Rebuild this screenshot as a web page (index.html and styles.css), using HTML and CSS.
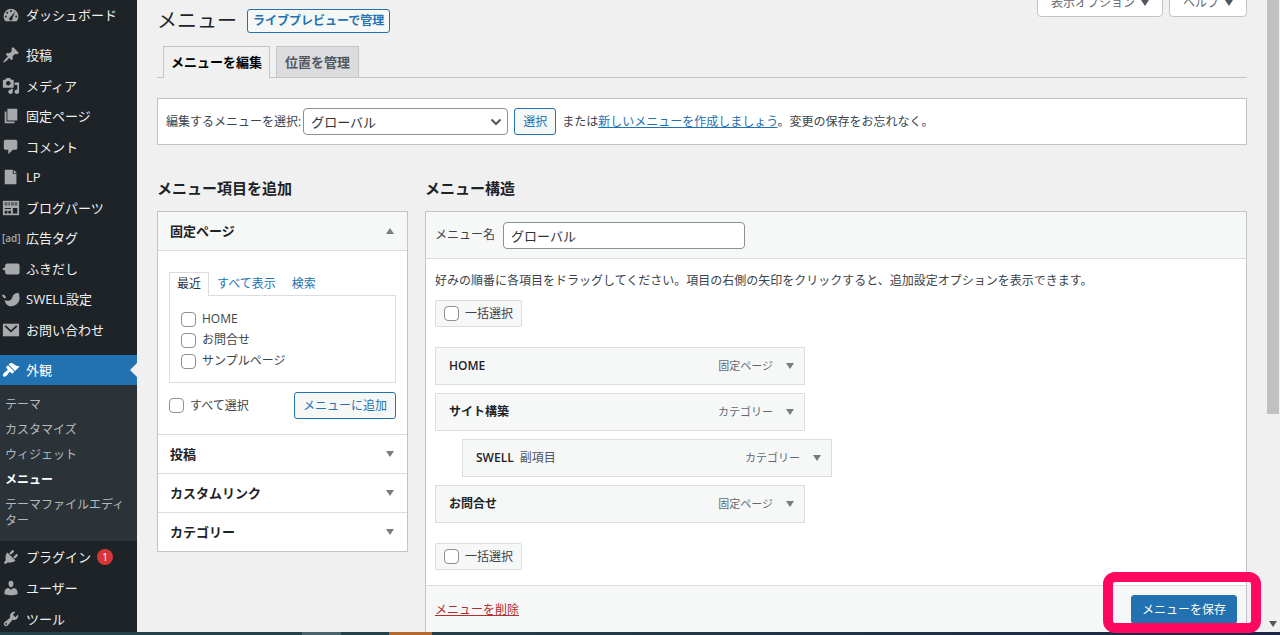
FILE: index.html
```html
<!DOCTYPE html>
<html lang="ja">
<head>
<meta charset="utf-8">
<title>メニュー</title>
<link rel="stylesheet" href="styles.css">
</head>
<body>
<nav class="sidebar">
  <ul class="nav-group nav-top">
    <li><a class="nav-link" href="#"><svg class="icon" viewBox="0 0 20 20"><path d="M3.8 17h12.4A8.300 8.300 0 1 0 3.800 17z"/><g fill="#1d2327"><circle cx="10" cy="5.600" r="1.100"/><circle cx="5.800" cy="7.600" r="1.100"/><circle cx="4.200" cy="11.700" r="1.100"/><circle cx="15.800" cy="11.700" r="1.100"/><path d="M14.800 6.200l-3.200 7a1.900 1.900 0 1 1-2.200-1z"/></g></svg>ダッシュボード</a></li>
  </ul>
  <ul class="nav-group nav-main">
    <li><a class="nav-link" href="#"><svg class="icon" viewBox="0 0 20 20"><path d="M10.440 3.020l1.820-1.820 6.360 6.350-1.830 1.820c-1.050-.68-2.480-.57-3.410.36l-.75.75c-.92.93-1.040 2.350-.35 3.410l-1.830 1.820-2.410-2.410-2.800 2.790c-.42.42-3.380 2.710-3.800 2.290s1.860-3.390 2.280-3.810l2.790-2.790L4.100 9.360l1.830-1.820c1.050.69 2.480.57 3.400-.36l.75-.75c.93-.92 1.050-2.350.36-3.410z"/></svg>投稿</a></li>
    <li><a class="nav-link" href="#"><svg class="icon" viewBox="0 0 20 20"><path d="M13 11V4c0-.55-.45-1-1-1h-1.670L9 1H5L3.670 3H2c-.55 0-1 .45-1 1v7c0 .55.45 1 1 1h10c.55 0 1-.45 1-1zM7 4.500c1.380 0 2.500 1.120 2.500 2.500S8.380 9.500 7 9.500 4.500 8.380 4.500 7 5.620 4.500 7 4.500zM14 6h5v10.500c0 1.380-1.120 2.500-2.500 2.500S14 17.880 14 16.500s1.120-2.500 2.500-2.500c.17 0 .34.02.5.05V9h-3V6zm-4 8.050V13h2v3.500c0 1.380-1.120 2.500-2.500 2.500S7 17.880 7 16.500 8.120 14 9.500 14c.17 0 .34.02.5.05z"/></svg>メディア</a></li>
    <li><a class="nav-link" href="#"><svg class="icon" viewBox="0 0 20 20"><path d="M6 15V2h11v13H6zm-1 1h9v2H3V5h2v11z"/></svg>固定ページ</a></li>
    <li><a class="nav-link" href="#"><svg class="icon" viewBox="0 0 20 20"><path d="M4 2h11c1.100 0 2 .9 2 2v7c0 1.100-.9 2-2 2h-3l-5 5v-5H4c-1.100 0-2-.9-2-2V4c0-1.100.9-2 2-2z"/></svg>コメント</a></li>
    <li><a class="nav-link" href="#"><svg class="icon" viewBox="0 0 20 20"><path d="M3 2h9v4.500h4V18H3zM13 2l3.500 3.500H13z"/></svg>LP</a></li>
    <li><a class="nav-link" href="#"><svg class="icon" viewBox="0 0 20 20"><path d="M1 2h18v16H1z"/><g fill="#1d2327"><path d="M3 4h3v3H3zM7 4h2v3H7zM10 4h3v3h-3zM14 4h3v3h-3zM3 10h7v1H3zM3 13h3v3H3zM7 13h3v3H7zM12 10h5v6h-5z"/></g><path d="M3 5h14v1H3z"/></svg>ブログパーツ</a></li>
    <li><a class="nav-link" href="#"><span class="ad-icon" aria-hidden="true">[ad]</span>広告タグ</a></li>
    <li><a class="nav-link" href="#"><svg class="icon" viewBox="0 0 20 20"><path d="M6 4h11c1.500 0 2.500 1 2.500 2.500v7c0 1.500-1 2.500-2.500 2.500H6c-1.500 0-2.500-1-2.500-2.500V12L0 10l3.500-2V6.500C3.500 5 4.500 4 6 4z"/></svg>ふきだし</a></li>
    <li><a class="nav-link" href="#"><svg class="icon" viewBox="0 0 20 20"><path d="M3 11c4 2 7 1 8.500-3 1-3.500 3-4.500 7-5 1.500 5 1.500 8-.5 11-2 3-5 4-8 4-4 0-6.500-3-7-7z"/><path d="M0 5c2.500 0 4 1 4.500 4C2 9.500.5 8 0 5z"/></svg>SWELL設定</a></li>
    <li><a class="nav-link" href="#"><svg class="icon" viewBox="0 0 20 20"><path d="M1 3h18v14H1z"/><path d="M3.500 5.500l6.500 6 6.500-6" fill="none" stroke="#1d2327" stroke-width="2"/></svg>お問い合わせ</a></li>
  </ul>
  <ul class="nav-group nav-open">
    <li><a class="nav-link current" href="#"><svg class="icon" viewBox="0 0 20 20"><path d="M14.480 11.060L7.410 3.990l1.500-1.500c.5-.56 2.300-.47 3.510.32 1.210.8 1.430 1.280 2.910 2.100 1.180.64 2.450 1.260 4.450.85zm-.71.71L6.700 4.700 4.930 6.470c-.39.39-.39 1.020 0 1.410l1.060 1.060c.39.39.39 1.030 0 1.420-.6.6-1.430 1.110-2.210 1.690-.35.26-.7.53-1.010.84C1.430 14.230.4 16.080 1.400 17.070c.99 1 2.840-.03 4.180-1.360.31-.31.58-.66.85-1.020.57-.78 1.080-1.610 1.690-2.210.39-.39 1.020-.39 1.410 0l1.060 1.060c.39.39 1.020.39 1.410 0z"/></svg>外観</a>
      <ul class="submenu">
        <li><a href="#">テーマ</a></li>
        <li><a href="#">カスタマイズ</a></li>
        <li><a href="#">ウィジェット</a></li>
        <li><a class="active" href="#">メニュー</a></li>
        <li class="long"><a href="#">テーマファイルエディター</a></li>
      </ul>
    </li>
    <li><a class="nav-link" href="#"><svg class="icon" viewBox="0 0 20 20"><path d="M13.110 4.360L9.870 7.600 8 5.730l3.240-3.240c.35-.34 1.050-.2 1.560.32.52.51.66 1.210.31 1.550zm-8 1.770l.91-1.120 9.010 9.010-1.190.84c-.71.71-2.630 1.160-3.820 1.160H6.140L4.900 17.260c-.59.59-1.540.59-2.120 0-.59-.58-.59-1.530 0-2.120l1.240-1.240v-3.880c0-1.130.4-3.190 1.090-3.890zm7.260 3.970l3.240-3.240c.34-.35 1.040-.21 1.550.31.52.51.66 1.210.31 1.550l-3.240 3.250z"/></svg>プラグイン<span class="badge">1</span></a></li>
    <li><a class="nav-link" href="#"><svg class="icon" viewBox="0 0 20 20"><path d="M10 9.250c-2.270 0-2.730-3.440-2.730-3.440C7 4.020 7.820 2 9.970 2c2.160 0 2.980 2.020 2.710 3.810 0 0-.41 3.440-2.680 3.440zm0 2.570L12.720 10c2.390 0 4.520 2.330 4.520 4.530v2.490s-3.650 1.130-7.240 1.130c-3.650 0-7.240-1.130-7.240-1.130v-2.490c0-2.250 1.940-4.480 4.470-4.480z"/></svg>ユーザー</a></li>
    <li><a class="nav-link" href="#"><svg class="icon" viewBox="0 0 20 20"><path d="M16.680 9.770c-1.340 1.340-3.300 1.670-4.950.99l-5.410 6.520c-.99.99-2.590.99-3.580 0s-.99-2.590 0-3.570l6.520-5.420c-.68-1.650-.35-3.610.99-4.950 1.280-1.280 3.120-1.620 4.720-1.060l-2.890 2.890 2.820 2.820 2.860-2.870c.53 1.580.18 3.390-1.080 4.650zM3.810 16.210c.4.39 1.040.39 1.430 0 .4-.4.4-1.040 0-1.430-.39-.4-1.030-.4-1.430 0-.39.39-.39 1.030 0 1.430z"/></svg>ツール</a></li>
  </ul>
</nav>

<main class="main">
  <header class="page-head">
    <div class="title-row">
      <h1>メニュー</h1>
      <a class="button strong" href="#">ライブプレビューで管理</a>
    </div>
    <div class="screen-links">
      <button type="button" class="screen-button">表示オプション<span class="arrow down dark"></span></button>
      <button type="button" class="screen-button">ヘルプ<span class="arrow down dark"></span></button>
    </div>
  </header>

  <nav class="tabs">
    <a class="tab selected" href="#">メニューを編集</a>
    <a class="tab" href="#">位置を管理</a>
  </nav>

  <form class="manage">
    <label for="menu-select">編集するメニューを選択:</label>
    <span class="select-wrap">
      <select id="menu-select" class="field"><option>グローバル</option></select>
      <svg class="chevron" viewBox="0 0 12 8"><path d="M1.500 1.500L6 6l4.500-4.500"/></svg>
    </span>
    <button type="button" class="button">選択</button>
    <span>または<a class="link" href="#">新しいメニューを作成しましょう</a>。変更の保存をお忘れなく。</span>
  </form>

  <div class="columns">
    <section class="col-add">
      <h2>メニュー項目を追加</h2>
      <div class="box accordion">
        <button type="button" class="acc-head open">固定ページ<span class="arrow up"></span></button>
        <div class="acc-body">
          <div class="mini-tabs">
            <a class="mini-tab selected" href="#">最近</a>
            <a class="mini-tab" href="#">すべて表示</a>
            <a class="mini-tab" href="#">検索</a>
          </div>
          <div class="page-list">
            <label><input type="checkbox" class="check">HOME</label>
            <label><input type="checkbox" class="check">お問合せ</label>
            <label><input type="checkbox" class="check">サンプルページ</label>
          </div>
          <div class="add-row">
            <label><input type="checkbox" class="check">すべて選択</label>
            <button type="button" class="button">メニューに追加</button>
          </div>
        </div>
        <button type="button" class="acc-head">投稿<span class="arrow down"></span></button>
        <button type="button" class="acc-head">カスタムリンク<span class="arrow down"></span></button>
        <button type="button" class="acc-head">カテゴリー<span class="arrow down"></span></button>
      </div>
    </section>

    <section class="col-edit">
      <h2>メニュー構造</h2>
      <div class="box">
        <div class="name-row">
          <label for="menu-name">メニュー名</label>
          <input id="menu-name" class="field" type="text" value="グローバル">
        </div>
        <div class="structure">
          <p>好みの順番に各項目をドラッグしてください。項目の右側の矢印をクリックすると、追加設定オプションを表示できます。</p>
          <label class="bulk"><input type="checkbox" class="check">一括選択</label>
          <ul class="items">
            <li class="item"><strong>HOME</strong><span class="type">固定ページ</span><span class="arrow down"></span></li>
            <li class="item"><strong>サイト構築</strong><span class="type">カテゴリー</span><span class="arrow down"></span></li>
            <li class="item child"><strong>SWELL</strong><span class="sub">副項目</span><span class="type">カテゴリー</span><span class="arrow down"></span></li>
            <li class="item"><strong>お問合せ</strong><span class="type">固定ページ</span><span class="arrow down"></span></li>
          </ul>
          <label class="bulk"><input type="checkbox" class="check">一括選択</label>
        </div>
        <footer class="edit-foot">
          <a class="delete" href="#">メニューを削除</a>
          <div class="save-wrap">
            <button type="button" class="button primary">メニューを保存</button>
            <span class="highlight"></span>
          </div>
        </footer>
      </div>
    </section>
  </div>
</main>

<div class="scrollbar" aria-hidden="true">
  <div class="thumb"></div>
  <span class="arrow down dark"></span>
</div>
<div class="taskbar" aria-hidden="true"></div>
</body>
</html>
```

FILE: styles.css
```css
* {
  box-sizing: border-box;
}

body {
  margin: 0;
  height: 100vh;
  overflow: hidden;
  display: grid;
  grid-template-columns: 137px minmax(0, 1fr) 14px;
  grid-template-rows: minmax(0, 1fr) 3px;
  background: #f0f0f1;
  color: #3c434a;
  font: 12px/18px "Open Sans", "Noto Sans CJK JP", sans-serif;
}

ul, h1, h2, p {
  margin: 0;
  padding: 0;
  list-style: none;
}

button, input, select {
  font: inherit;
  color: inherit;
}

a {
  text-decoration: none;
}

/* Sidebar */
.sidebar {
  background: #1d2327;
  overflow: hidden;
}

.nav-main {
  display: grid;
  grid-auto-rows: 1fr;
  height: 305px;
  margin: 10px 0;
}

.nav-link {
  position: relative;
  display: flex;
  align-items: center;
  gap: 6px;
  height: 31px;
  padding-left: 2px;
  color: #f0f0f1;
  font-size: 13px;
  white-space: nowrap;
}

.nav-top .nav-link,
.nav-link.current {
  height: 30px;
}

.nav-main .nav-link {
  height: 100%;
}

.icon {
  width: 18px;
  height: 18px;
  flex: none;
  fill: #a7aaad;
}

.ad-icon {
  width: 18px;
  color: #a7aaad;
  font-size: 10px;
  font-weight: 600;
}

.nav-link.current {
  background: #2271b1;
  color: #fff;
}

.current .icon {
  fill: #fff;
}

.nav-link.current::after {
  content: "";
  position: absolute;
  right: 0;
  top: 8px;
  border: 7px solid transparent;
  border-left-width: 0;
  border-right-color: #f0f0f1;
}

.submenu {
  background: #2c3338;
  padding: 7px 5px;
  line-height: 25px;
}

.submenu a {
  color: #b4b9be;
}

.submenu .active {
  color: #fff;
  font-weight: 600;
}

.submenu .long {
  padding: 5px 0;
  line-height: 16px;
}

.badge {
  width: 16px;
  height: 16px;
  border-radius: 8px;
  background: #d63638;
  color: #fff;
  font-size: 10px;
  line-height: 16px;
  text-align: center;
}

/* Shared controls */
.button {
  height: 27px;
  padding: 0 8px;
  border: 1px solid #2271b1;
  border-radius: 3px;
  background: #f6f7f7;
  color: #2271b1;
  line-height: 25px;
  white-space: nowrap;
}

.button.strong {
  height: 24px;
  padding: 0 5px;
  font-weight: 600;
  line-height: 22px;
}

.button.primary {
  height: 29px;
  padding: 0 10px;
  background: #2271b1;
  color: #fff;
}

.field {
  height: 27px;
  padding: 0 7px;
  border: 1px solid #8c8f94;
  border-radius: 4px;
  background: #fff;
  color: #2c3338;
  font-size: 13px;
}

.check {
  appearance: none;
  width: 15px;
  height: 15px;
  margin: 0;
  flex: none;
  border: 1px solid #8c8f94;
  border-radius: 4px;
  background: #fff;
}

.arrow {
  flex: none;
  border: 4px solid transparent;
  color: #787c82;
}

.arrow.down {
  border-top: 6px solid;
  border-bottom: 0;
}

.arrow.up {
  border-bottom: 6px solid;
  border-top: 0;
}

.arrow.dark {
  color: #50575e;
}

.link {
  color: #2271b1;
  text-decoration: underline;
}

/* Main area */
.main {
  padding: 0 19px 0 20px;
}

.page-head {
  display: flex;
  justify-content: space-between;
  align-items: flex-start;
  height: 46px;
}

.title-row {
  display: flex;
  align-items: center;
  gap: 10px;
  padding-top: 9px;
}

h1 {
  color: #1d2327;
  font-size: 20px;
  font-weight: 400;
  line-height: 24px;
}

.screen-links {
  display: flex;
  gap: 6px;
  margin-top: -11px;
}

.screen-button {
  display: flex;
  align-items: center;
  gap: 6px;
  height: 28px;
  padding: 0 13px;
  border: 1px solid #c3c4c7;
  border-radius: 0 0 4px 4px;
  background: #fff;
  color: #646970;
}

.tabs {
  display: flex;
  align-items: flex-end;
  gap: 6px;
  padding-left: 6px;
  border-bottom: 1px solid #c3c4c7;
}

.tab {
  padding: 0 8px;
  border: 1px solid #c3c4c7;
  border-bottom: 0;
  background: #dcdcde;
  color: #50575e;
  font-size: 13px;
  font-weight: 600;
  line-height: 30px;
}

.tab.selected {
  margin-bottom: -1px;
  padding: 0 7px 1px;
  background: #f0f0f1;
  color: #000;
}

.manage {
  display: flex;
  align-items: center;
  gap: 6px;
  height: 47px;
  margin-top: 20px;
  padding: 0 8px;
  border: 1px solid #c3c4c7;
  background: #fff;
}

.manage label {
  margin-right: -4px;
}

.select-wrap {
  position: relative;
  display: flex;
  width: 205px;
}

select.field {
  appearance: none;
  width: 100%;
}

.chevron {
  position: absolute;
  right: 6px;
  top: 10px;
  width: 12px;
  height: 8px;
  fill: none;
  stroke: #50575e;
  stroke-width: 2;
  pointer-events: none;
}

.columns {
  display: grid;
  grid-template-columns: 251px minmax(0, 1fr);
  gap: 17px;
  align-items: start;
  padding-top: 31px;
}

h2 {
  color: #1d2327;
  font-size: 15px;
  font-weight: 600;
  line-height: 24px;
  margin-bottom: 11px;
}

.box {
  border: 1px solid #c3c4c7;
  background: #fff;
}

/* Add items */
.acc-head {
  display: flex;
  justify-content: space-between;
  align-items: center;
  width: 100%;
  height: 38px;
  padding: 0 13px 0 12px;
  border: 0;
  background: #fff;
  color: #1d2327;
  font-size: 13px;
  font-weight: 600;
}

.acc-head + .acc-head {
  height: 39px;
  border-top: 1px solid #dcdcde;
}

.acc-head.open {
  background: #f6f7f7;
}

.acc-body {
  padding: 21px 11px 15px;
  border-top: 1px solid #dcdcde;
  border-bottom: 1px solid #dcdcde;
}

.mini-tabs {
  display: flex;
}

.mini-tab {
  padding: 0 7px;
  border: 1px solid transparent;
  border-bottom: 0;
  color: #2271b1;
  line-height: 22px;
}

.mini-tab.selected {
  margin-bottom: -1px;
  padding-bottom: 1px;
  border-color: #dcdcde;
  background: #fff;
  color: #2c3338;
}

.page-list {
  display: grid;
  gap: 3px;
  padding: 14px 11px 12px;
  border: 1px solid #dcdcde;
}

.page-list label,
.add-row label {
  display: flex;
  align-items: center;
  gap: 6px;
}

.add-row {
  display: flex;
  justify-content: space-between;
  align-items: center;
  margin-top: 9px;
}

/* Menu structure */
.name-row {
  display: flex;
  align-items: center;
  gap: 8px;
  height: 47px;
  padding: 0 9px;
  border-bottom: 1px solid #dcdcde;
  background: #f6f7f7;
}

.name-row .field {
  width: 242px;
}

.structure {
  padding: 13px 9px 15px;
}

.bulk {
  display: inline-flex;
  align-items: center;
  gap: 6px;
  height: 27px;
  padding: 0 8px;
  border: 1px solid #dcdcde;
  border-radius: 2px;
  background: #f6f7f7;
  vertical-align: top;
}

.structure p {
  margin-bottom: 10px;
}

.items {
  display: grid;
  gap: 8px;
  width: 370px;
  margin: 20px 0;
}

.item {
  display: flex;
  align-items: center;
  height: 38px;
  padding: 0 10px 0 13px;
  border: 1px solid #dcdcde;
  background: #f6f7f7;
}

.item.child {
  margin: 0 -27px 0 27px;
}

.item strong {
  color: #1d2327;
  font-weight: 600;
}

.sub {
  margin-left: 6px;
  color: #50575e;
}

.type {
  margin: 0 13px 0 auto;
  color: #646970;
  font-size: 11px;
}

.edit-foot {
  display: flex;
  justify-content: space-between;
  align-items: center;
  height: 48px;
  padding: 0 9px;
  border-top: 1px solid #dcdcde;
  background: #f6f7f7;
}

.delete {
  color: #b32d2e;
  text-decoration: underline;
}

.save-wrap {
  position: relative;
}

.highlight {
  position: absolute;
  inset: -23px -24px -9px -28px;
  z-index: 2;
  border: 10px solid #ff0860;
  border-radius: 12px;
  pointer-events: none;
}

/* Window edges */
.scrollbar {
  display: flex;
  flex-direction: column;
  justify-content: space-between;
  align-items: center;
  padding-bottom: 5px;
}

.thumb {
  width: 12px;
  height: 66%;
  background: #c1c1c1;
}

.taskbar {
  position: relative;
  z-index: 1;
  grid-column: 1 / -1;
  background: linear-gradient(90deg, #24414c 302px, #4b636c 302px 341px, #24414c 341px 389px, #b5682f 389px 432px, #243f4a 432px, #1c2543);
}
```
